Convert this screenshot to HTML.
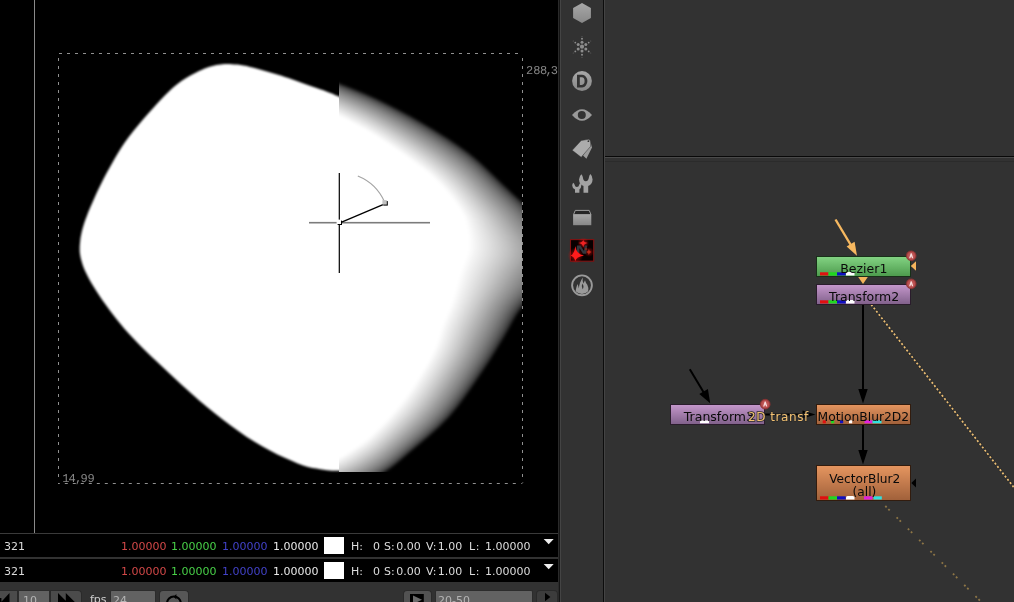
<!DOCTYPE html>
<html><head><meta charset="utf-8"><title>Nuke</title>
<style>
html,body{margin:0;padding:0}
body{width:1014px;height:602px;overflow:hidden;background:#323232;position:relative;font-family:"Liberation Sans",sans-serif;font-size:12px;color:#d8d8d8}
.abs{position:absolute}
svg,.st,.fld{will-change:transform}
#viewer{left:0;top:0;width:558px;height:582px;background:#000}
.st{position:absolute;white-space:nowrap;font-family:"DejaVu Sans","Liberation Sans",sans-serif;font-size:11px;line-height:14px;height:14px}
.btn{position:absolute;top:590px;height:14px;background:#4b4b4b;border-radius:4px 4px 0 0;border:1px solid #2a2a2a;border-bottom:none;box-sizing:border-box}
.fld{position:absolute;top:590px;height:14px;background:#626262;border:1px solid #2c2c2c;border-bottom:none;box-sizing:border-box;color:#b4b4b4;font-family:"DejaVu Sans","Liberation Sans",sans-serif;font-size:11px;line-height:20px;padding-left:2px;border-radius:2px 2px 0 0}
.nl{font-family:"DejaVu Sans","Liberation Sans",sans-serif;font-size:12px}
</style></head><body>
<div id="viewer" class="abs"></div>
<svg class="abs" style="left:0;top:0" width="558" height="534" viewBox="0 0 558 534">
<defs>
<clipPath id="cl"><rect x="0" y="0" width="339" height="534"/></clipPath>
<clipPath id="cr"><rect x="339" y="53" width="183" height="419"/></clipPath>
<filter id="soft2" filterUnits="userSpaceOnUse" x="300" y="40" width="300" height="480"><feGaussianBlur stdDeviation="1.6"/></filter>
<filter id="soft" x="-5%" y="-5%" width="110%" height="110%"><feGaussianBlur stdDeviation="0.9"/></filter>
</defs>
<g clip-path="url(#cl)"><path d="M352.0,102.0L349.8,101.1 347.6,100.2 345.4,99.3 343.1,98.4 341.0,97.5 338.8,96.6 336.8,95.7 334.9,94.9 333.1,94.1 331.1,93.3 328.9,92.4 326.4,91.4 323.4,90.3 320.1,89.2 316.6,87.9 312.9,86.7 309.2,85.4 305.7,84.2 302.2,83.0 298.8,81.7 295.4,80.5 291.9,79.3 288.4,78.1 285.0,76.9 281.6,75.8 278.1,74.7 274.7,73.7 271.2,72.7 267.8,71.7 264.3,70.7 260.8,69.7 257.2,68.8 253.6,67.8 250.1,66.9 246.7,66.1 243.5,65.5 240.5,65.0 237.5,64.6 234.7,64.4 232.0,64.2 229.5,64.1 227.0,64.1 224.7,64.1 222.5,64.3 220.5,64.4 218.5,64.7 216.5,65.1 214.5,65.5 212.5,66.0 210.6,66.4 208.8,67.0 206.8,67.7 204.6,68.6 202.0,69.7 199.0,71.1 195.7,72.7 192.2,74.5 188.6,76.5 184.9,78.7 181.4,81.1 178.1,83.6 174.9,86.1 171.7,88.8 168.4,91.9 164.8,95.4 160.7,99.7 155.9,104.9 150.5,110.9 144.7,117.5 139.0,124.2 133.6,130.8 128.9,136.8 124.9,142.3 121.4,147.5 118.3,152.5 115.3,157.4 112.5,162.4 109.7,167.4 106.9,172.5 104.1,177.7 101.5,182.9 99.0,188.1 96.6,193.1 94.4,198.0 92.3,202.8 90.2,207.5 88.3,212.1 86.6,216.6 85.0,220.8 83.7,224.8 82.6,228.5 81.7,231.9 81.1,235.1 80.5,238.1 80.2,241.0 79.9,243.9 79.7,246.6 79.7,249.1 79.7,251.6 80.0,254.0 80.4,256.5 81.0,259.2 81.8,262.1 82.7,265.0 83.8,268.0 85.2,271.2 86.8,274.6 88.7,278.3 90.9,282.3 93.5,286.6 96.3,291.1 99.4,295.7 102.6,300.4 105.9,305.1 109.3,309.8 112.9,314.5 116.6,319.2 120.5,324.1 124.6,328.9 128.9,333.8 133.4,338.6 137.9,343.3 142.6,348.0 147.7,352.9 153.2,358.2 159.4,364.0 166.3,370.5 174.0,377.7 182.1,385.2 190.5,392.8 198.9,400.2 207.0,407.0 215.0,413.4 223.0,419.7 231.0,425.7 239.0,431.5 246.8,436.9 254.5,441.8 262.1,446.3 269.9,450.5 277.4,454.4 284.7,457.8 291.6,460.8 297.7,463.4 303.1,465.4 308.0,466.9 312.4,467.9 316.4,468.6 320.1,469.2 323.6,469.8 326.8,470.3 329.5,470.5 331.9,470.7 334.2,470.7 336.4,470.7 338.7,470.7 341.0,470.8 343.3,470.8 345.5,470.8 347.6,470.7 349.8,470.7 352.0,470.7Z" fill="#fff" filter="url(#soft)"/></g>
<g clip-path="url(#cr)"><g fill="#fff" filter="url(#soft2)">
<path d="M320.0,76.0L324.3,77.6 328.3,79.0 332.9,80.7 339.0,83.0 346.9,86.0 356.0,89.6 366.1,93.7 376.5,98.4 387.5,103.7 399.2,109.7 411.2,116.1 423.0,122.8 434.8,129.8 446.8,137.3 458.5,145.0 469.5,153.0 479.5,161.3 488.9,170.1 497.9,178.8 506.7,187.3 515.4,195.4 524.0,203.2 532.2,211.0 540.0,219.0 548.3,227.2 556.8,235.6 563.6,243.9 567.0,252.0 565.6,259.8 560.8,267.4 554.3,274.9 548.0,282.0 541.8,288.7 534.9,295.1 528.0,301.4 522.0,308.0 517.2,314.9 513.1,322.0 509.2,329.3 504.8,337.0 500.0,345.0 495.0,353.2 489.5,361.9 483.2,371.5 475.8,382.4 467.5,394.4 458.7,406.4 449.6,417.4 439.7,427.4 429.0,436.9 418.7,445.5 409.7,453.0 402.7,459.1 397.0,463.9 391.7,468.1 386.0,472.0 379.8,475.8 373.4,479.2 366.8,482.3 360.0,485.0 352.8,487.2 345.2,488.9 337.6,490.4 330.0,492.0 300.0,492.0 300.0,76.0Z" opacity="0.0208"/>
<path d="M320.0,76.0L324.3,77.6 328.3,79.0 332.9,80.7 339.0,83.0 346.9,86.1 356.0,89.6 366.1,93.7 376.5,98.4 387.5,103.8 399.2,109.7 411.2,116.1 423.0,122.8 434.8,129.9 446.8,137.3 458.5,145.0 469.5,153.0 479.5,161.4 488.9,170.1 497.9,178.8 506.7,187.3 515.4,195.4 524.0,203.2 532.2,211.0 540.0,219.0 548.2,227.2 556.7,235.6 563.6,243.9 567.0,252.0 565.6,259.8 560.8,267.4 554.3,274.8 548.0,282.0 541.7,288.7 534.8,295.1 528.0,301.4 522.0,308.0 517.2,314.9 513.1,322.0 509.2,329.3 504.8,337.0 500.0,345.0 495.0,353.2 489.5,361.9 483.2,371.5 475.8,382.4 467.5,394.4 458.7,406.4 449.6,417.4 439.7,427.4 429.0,436.9 418.7,445.5 409.7,453.0 402.7,459.0 397.0,463.9 391.7,468.1 386.0,472.0 379.7,475.8 373.4,479.2 366.8,482.3 360.0,485.0 352.8,487.2 345.2,488.9 337.6,490.4 330.0,492.0 300.0,492.0 300.0,76.0Z" opacity="0.0213"/>
<path d="M320.0,76.0L324.3,77.6 328.3,79.0 332.9,80.7 339.0,83.0 346.9,86.1 356.0,89.7 366.1,93.8 376.5,98.5 387.5,103.8 399.2,109.7 411.2,116.1 423.0,122.9 434.8,129.9 446.8,137.3 458.5,145.1 469.5,153.1 479.5,161.4 488.9,170.1 497.8,178.9 506.6,187.3 515.4,195.4 523.9,203.3 532.1,211.1 539.9,219.0 548.1,227.2 556.6,235.6 563.5,243.9 566.9,252.0 565.5,259.8 560.7,267.4 554.2,274.8 547.9,282.0 541.7,288.7 534.8,295.1 527.9,301.4 521.9,308.0 517.1,314.9 513.0,322.0 509.1,329.3 504.7,337.0 499.9,344.9 494.9,353.2 489.5,361.9 483.1,371.5 475.7,382.4 467.5,394.4 458.7,406.4 449.5,417.4 439.6,427.4 429.0,436.9 418.6,445.5 409.6,453.0 402.6,459.0 396.9,463.9 391.7,468.0 386.0,472.0 379.7,475.8 373.4,479.2 366.8,482.3 360.0,485.0 352.8,487.1 345.2,488.8 337.6,490.4 330.0,492.0 300.0,492.0 300.0,76.0Z" opacity="0.0217"/>
<path d="M320.0,76.1L324.3,77.7 328.3,79.1 332.9,80.8 339.0,83.1 346.9,86.2 356.0,89.7 366.1,93.8 376.5,98.5 387.5,103.9 399.2,109.8 411.2,116.2 423.0,122.9 434.8,130.0 446.8,137.4 458.5,145.2 469.4,153.1 479.5,161.5 488.8,170.2 497.8,178.9 506.6,187.4 515.3,195.4 523.8,203.3 532.0,211.1 539.8,219.0 548.0,227.2 556.5,235.6 563.3,243.9 566.7,252.0 565.3,259.8 560.5,267.4 554.0,274.8 547.7,282.0 541.5,288.7 534.6,295.0 527.8,301.4 521.8,308.0 517.0,314.9 512.9,321.9 509.0,329.3 504.6,337.0 499.8,344.9 494.8,353.1 489.4,361.9 483.0,371.4 475.6,382.4 467.4,394.3 458.6,406.3 449.5,417.3 439.6,427.4 428.9,436.8 418.6,445.5 409.6,452.9 402.6,459.0 396.9,463.8 391.6,468.0 385.9,471.9 379.7,475.7 373.3,479.2 366.8,482.2 359.9,484.9 352.7,487.1 345.2,488.8 337.6,490.3 330.0,491.9 300.0,491.9 300.0,76.1Z" opacity="0.0222"/>
<path d="M320.0,76.2L324.3,77.7 328.3,79.2 332.9,80.8 339.0,83.2 346.9,86.2 356.0,89.8 366.1,93.9 376.5,98.6 387.5,104.0 399.2,109.9 411.2,116.3 423.0,123.1 434.8,130.1 446.8,137.5 458.4,145.2 469.4,153.2 479.4,161.5 488.7,170.2 497.7,179.0 506.4,187.4 515.2,195.5 523.7,203.3 531.8,211.1 539.6,219.0 547.8,227.2 556.3,235.6 563.1,243.9 566.5,252.0 565.1,259.8 560.3,267.4 553.8,274.8 547.5,281.9 541.3,288.7 534.5,295.0 527.6,301.3 521.6,308.0 516.8,314.9 512.8,321.9 508.9,329.2 504.5,336.9 499.7,344.9 494.7,353.1 489.3,361.9 482.9,371.4 475.5,382.3 467.3,394.3 458.5,406.3 449.4,417.3 439.4,427.3 428.8,436.8 418.5,445.4 409.5,452.9 402.5,459.0 396.8,463.8 391.5,467.9 385.8,471.9 379.6,475.7 373.2,479.1 366.7,482.2 359.9,484.9 352.7,487.0 345.2,488.7 337.5,490.3 329.9,491.9 300.0,491.9 300.0,76.2Z" opacity="0.0227"/>
<path d="M320.0,76.3L324.3,77.8 328.3,79.2 332.9,80.9 339.0,83.3 346.9,86.3 356.0,89.9 366.1,94.0 376.5,98.7 387.5,104.1 399.2,110.0 411.2,116.5 423.0,123.2 434.8,130.2 446.7,137.6 458.4,145.4 469.3,153.3 479.3,161.6 488.6,170.3 497.5,179.0 506.3,187.5 515.0,195.5 523.5,203.4 531.6,211.1 539.4,219.1 547.6,227.3 556.0,235.6 562.8,243.9 566.2,252.0 564.8,259.8 560.0,267.4 553.5,274.8 547.3,281.9 541.1,288.6 534.2,295.0 527.4,301.3 521.4,307.9 516.6,314.9 512.6,321.9 508.7,329.2 504.3,336.9 499.5,344.8 494.5,353.1 489.1,361.8 482.8,371.3 475.4,382.3 467.1,394.2 458.3,406.2 449.2,417.2 439.3,427.3 428.7,436.7 418.3,445.4 409.4,452.8 402.4,458.9 396.7,463.7 391.4,467.9 385.7,471.8 379.5,475.6 373.2,479.0 366.6,482.1 359.8,484.8 352.6,486.9 345.1,488.7 337.5,490.2 329.9,491.8 300.0,491.8 300.0,76.3Z" opacity="0.0233"/>
<path d="M320.0,76.4L324.3,77.9 328.3,79.4 332.9,81.1 339.0,83.4 346.9,86.5 356.0,90.0 366.1,94.2 376.5,98.9 387.5,104.2 399.2,110.2 411.2,116.6 423.0,123.4 434.8,130.4 446.7,137.8 458.3,145.5 469.2,153.5 479.2,161.8 488.5,170.4 497.4,179.1 506.1,187.6 514.8,195.6 523.2,203.4 531.4,211.2 539.1,219.1 547.3,227.3 555.7,235.6 562.5,243.9 565.8,252.0 564.4,259.7 559.6,267.3 553.2,274.7 546.9,281.9 540.8,288.6 533.9,295.0 527.1,301.3 521.1,307.9 516.4,314.8 512.3,321.9 508.4,329.2 504.0,336.8 499.3,344.8 494.3,353.0 488.9,361.7 482.6,371.3 475.2,382.2 467.0,394.2 458.1,406.2 449.0,417.2 439.1,427.2 428.5,436.7 418.2,445.3 409.2,452.8 402.2,458.8 396.5,463.7 391.3,467.8 385.6,471.7 379.4,475.5 373.1,478.9 366.5,482.0 359.7,484.7 352.6,486.8 345.1,488.6 337.4,490.1 329.9,491.7 300.0,491.7 300.0,76.4Z" opacity="0.0238"/>
<path d="M320.0,76.5L324.3,78.1 328.3,79.5 332.9,81.2 339.0,83.6 346.9,86.6 356.0,90.2 366.1,94.3 376.5,99.0 387.5,104.4 399.2,110.4 411.2,116.8 423.0,123.6 434.8,130.6 446.6,138.0 458.2,145.7 469.1,153.6 479.0,161.9 488.3,170.6 497.2,179.3 505.9,187.7 514.6,195.7 523.0,203.5 531.1,211.2 538.8,219.1 546.9,227.3 555.3,235.6 562.0,243.9 565.3,251.9 564.0,259.7 559.2,267.3 552.8,274.7 546.5,281.8 540.4,288.6 533.6,294.9 526.8,301.3 520.8,307.9 516.0,314.8 512.0,321.8 508.1,329.1 503.8,336.8 499.0,344.7 494.1,352.9 488.6,361.7 482.3,371.2 475.0,382.1 466.7,394.1 457.9,406.1 448.8,417.1 439.0,427.1 428.3,436.6 418.0,445.2 409.1,452.7 402.1,458.7 396.4,463.6 391.1,467.7 385.4,471.6 379.2,475.4 372.9,478.8 366.4,481.9 359.6,484.5 352.5,486.7 345.0,488.4 337.4,490.0 329.8,491.6 300.0,491.6 300.0,76.5Z" opacity="0.0244"/>
<path d="M320.0,76.7L324.3,78.3 328.3,79.7 332.9,81.4 339.0,83.7 346.9,86.8 356.0,90.4 366.1,94.5 376.5,99.2 387.5,104.6 399.2,110.6 411.2,117.1 423.0,123.8 434.7,130.8 446.6,138.2 458.1,145.9 469.0,153.8 478.9,162.1 488.1,170.7 497.0,179.4 505.7,187.8 514.3,195.8 522.7,203.5 530.7,211.3 538.4,219.1 546.5,227.3 554.8,235.6 561.5,243.9 564.8,251.9 563.5,259.7 558.7,267.3 552.3,274.6 546.0,281.8 539.9,288.5 533.1,294.9 526.4,301.2 520.4,307.9 515.7,314.8 511.7,321.8 507.8,329.0 503.4,336.7 498.7,344.6 493.8,352.8 488.4,361.6 482.1,371.1 474.7,382.0 466.5,394.0 457.7,406.0 448.6,417.0 438.7,427.0 428.1,436.5 417.8,445.1 408.9,452.6 401.9,458.6 396.2,463.5 390.9,467.6 385.3,471.5 379.1,475.3 372.8,478.7 366.3,481.7 359.5,484.4 352.4,486.6 344.9,488.3 337.3,489.8 329.8,491.5 300.0,491.5 300.0,76.7Z" opacity="0.0250"/>
<path d="M320.0,76.9L324.3,78.5 328.3,79.9 332.9,81.6 339.0,83.9 346.9,87.0 356.0,90.6 366.1,94.8 376.5,99.5 387.5,104.9 399.2,110.9 411.2,117.4 423.0,124.1 434.7,131.1 446.5,138.5 458.0,146.2 468.8,154.0 478.7,162.3 487.9,170.9 496.7,179.6 505.4,187.9 513.9,195.9 522.3,203.6 530.3,211.3 537.9,219.2 546.0,227.3 554.3,235.6 560.9,243.9 564.2,251.9 562.8,259.6 558.1,267.2 551.7,274.6 545.5,281.7 539.4,288.4 532.6,294.8 525.9,301.2 520.0,307.8 515.3,314.7 511.3,321.7 507.4,329.0 503.0,336.6 498.3,344.6 493.4,352.7 488.0,361.5 481.7,371.0 474.4,381.9 466.2,393.9 457.4,405.9 448.3,416.9 438.4,426.9 427.8,436.4 417.6,445.0 408.6,452.5 401.6,458.5 396.0,463.3 390.7,467.4 385.1,471.3 378.9,475.1 372.6,478.5 366.2,481.6 359.4,484.2 352.3,486.4 344.8,488.1 337.2,489.7 329.7,491.3 300.0,491.3 300.0,76.9Z" opacity="0.0256"/>
<path d="M320.0,77.1L324.3,78.7 328.3,80.1 332.9,81.8 339.0,84.2 346.9,87.2 356.0,90.9 366.1,95.0 376.5,99.8 387.5,105.2 399.2,111.2 411.2,117.7 423.0,124.4 434.7,131.4 446.4,138.8 457.9,146.4 468.6,154.3 478.5,162.5 487.7,171.1 496.4,179.7 505.1,188.1 513.6,196.0 521.9,203.7 529.8,211.4 537.4,219.2 545.4,227.3 553.6,235.6 560.3,243.9 563.5,251.9 562.2,259.6 557.4,267.2 551.1,274.5 544.9,281.6 538.8,288.4 532.1,294.8 525.4,301.2 519.5,307.8 514.8,314.7 510.8,321.7 506.9,328.9 502.6,336.5 497.9,344.5 493.0,352.6 487.7,361.3 481.4,370.9 474.0,381.8 465.8,393.7 457.1,405.7 448.0,416.8 438.1,426.8 427.6,436.2 417.3,444.9 408.4,452.4 401.4,458.4 395.7,463.2 390.5,467.3 384.8,471.2 378.7,475.0 372.4,478.3 366.0,481.4 359.3,484.0 352.1,486.2 344.7,488.0 337.1,489.5 329.6,491.2 300.0,491.2 300.0,77.1Z" opacity="0.0263"/>
<path d="M320.0,77.4L324.3,78.9 328.3,80.4 332.9,82.1 339.0,84.4 346.9,87.5 356.0,91.1 366.1,95.3 376.5,100.1 387.5,105.5 399.3,111.5 411.2,118.0 423.0,124.8 434.7,131.8 446.4,139.1 457.8,146.8 468.4,154.6 478.2,162.8 487.4,171.4 496.1,180.0 504.7,188.3 513.2,196.2 521.4,203.8 529.3,211.5 536.8,219.3 544.8,227.4 552.9,235.6 559.5,243.8 562.7,251.8 561.4,259.5 556.7,267.1 550.3,274.5 544.2,281.6 538.2,288.3 531.5,294.7 524.8,301.1 519.0,307.7 514.3,314.6 510.3,321.6 506.4,328.8 502.1,336.4 497.4,344.3 492.6,352.5 487.2,361.2 481.0,370.7 473.7,381.6 465.5,393.6 456.7,405.6 447.6,416.6 437.8,426.6 427.2,436.1 417.0,444.7 408.1,452.2 401.1,458.2 395.4,463.0 390.2,467.1 384.6,471.0 378.4,474.8 372.2,478.2 365.8,481.2 359.1,483.8 352.0,486.0 344.6,487.8 337.0,489.3 329.6,491.0 300.0,491.0 300.0,77.4Z" opacity="0.0270"/>
<path d="M320.0,77.7L324.3,79.2 328.3,80.6 332.9,82.3 339.0,84.7 346.9,87.8 356.0,91.4 366.1,95.6 376.5,100.4 387.5,105.8 399.3,111.9 411.3,118.4 423.0,125.2 434.6,132.2 446.3,139.5 457.6,147.1 468.2,154.9 478.0,163.1 487.1,171.6 495.8,180.2 504.3,188.5 512.7,196.3 520.9,204.0 528.7,211.6 536.2,219.3 544.1,227.4 552.2,235.6 558.7,243.8 561.9,251.8 560.5,259.5 555.8,267.0 549.6,274.4 543.4,281.5 537.4,288.2 530.8,294.7 524.2,301.0 518.3,307.7 513.7,314.5 509.7,321.5 505.9,328.7 501.6,336.3 496.9,344.2 492.1,352.4 486.8,361.1 480.5,370.6 473.2,381.5 465.0,393.4 456.3,405.4 447.2,416.4 437.4,426.5 426.9,436.0 416.6,444.6 407.7,452.1 400.8,458.1 395.1,462.9 389.9,466.9 384.3,470.8 378.2,474.6 372.0,477.9 365.6,480.9 358.9,483.6 351.8,485.8 344.5,487.5 336.9,489.1 329.5,490.8 300.0,490.8 300.0,77.7Z" opacity="0.0278"/>
<path d="M320.0,78.0L324.3,79.5 328.3,81.0 332.9,82.7 339.0,85.0 346.9,88.1 356.0,91.8 366.1,96.0 376.5,100.8 387.5,106.2 399.3,112.3 411.3,118.9 423.0,125.6 434.6,132.6 446.2,139.9 457.4,147.5 468.0,155.3 477.7,163.4 486.8,171.9 495.4,180.4 503.8,188.7 512.2,196.5 520.3,204.1 528.1,211.6 535.5,219.4 543.3,227.4 551.3,235.6 557.8,243.8 560.9,251.8 559.6,259.4 554.9,267.0 548.7,274.3 542.6,281.4 536.6,288.1 530.0,294.6 523.5,301.0 517.7,307.6 513.0,314.5 509.1,321.4 505.3,328.6 501.0,336.2 496.3,344.1 491.6,352.2 486.3,360.9 480.1,370.4 472.8,381.3 464.6,393.2 455.8,405.3 446.8,416.3 437.0,426.3 426.5,435.8 416.2,444.4 407.4,451.9 400.4,457.9 394.8,462.7 389.6,466.7 384.0,470.6 377.9,474.3 371.7,477.7 365.4,480.7 358.7,483.3 351.7,485.5 344.3,487.3 336.8,488.9 329.4,490.5 300.0,490.5 300.0,78.0Z" opacity="0.0286"/>
<path d="M320.0,78.3L324.3,79.9 328.3,81.3 332.9,83.0 339.0,85.4 346.9,88.5 356.0,92.1 366.1,96.4 376.5,101.2 387.5,106.6 399.3,112.8 411.3,119.3 423.0,126.1 434.5,133.1 446.1,140.4 457.2,147.9 467.7,155.7 477.4,163.8 486.4,172.2 495.0,180.7 503.3,188.9 511.6,196.7 519.7,204.2 527.4,211.7 534.7,219.4 542.4,227.4 550.4,235.6 556.8,243.8 559.9,251.7 558.5,259.4 553.9,266.9 547.7,274.2 541.7,281.3 535.8,288.0 529.2,294.5 522.7,300.9 516.9,307.6 512.3,314.4 508.4,321.3 504.6,328.5 500.3,336.1 495.7,343.9 491.0,352.1 485.7,360.7 479.5,370.2 472.2,381.1 464.1,393.1 455.3,405.1 446.3,416.1 436.5,426.1 426.0,435.6 415.8,444.2 407.0,451.7 400.0,457.7 394.4,462.5 389.2,466.5 383.6,470.3 377.6,474.1 371.4,477.4 365.1,480.4 358.5,483.1 351.5,485.3 344.1,487.0 336.7,488.6 329.3,490.3 300.0,490.3 300.0,78.3Z" opacity="0.0294"/>
<path d="M320.0,78.7L324.3,80.2 328.3,81.7 332.9,83.4 339.0,85.7 346.9,88.9 356.0,92.5 366.1,96.8 376.5,101.6 387.5,107.1 399.3,113.3 411.3,119.9 423.0,126.6 434.5,133.6 445.9,140.9 457.0,148.4 467.5,156.1 477.0,164.2 486.0,172.6 494.5,181.0 502.8,189.2 511.0,196.9 519.0,204.4 526.6,211.9 533.8,219.5 541.5,227.5 549.4,235.6 555.7,243.8 558.8,251.7 557.4,259.3 552.8,266.8 546.7,274.1 540.7,281.2 534.8,287.9 528.3,294.4 521.9,300.8 516.1,307.5 511.5,314.3 507.6,321.2 503.9,328.4 499.6,335.9 495.0,343.8 490.3,351.9 485.1,360.5 478.9,370.0 471.7,380.9 463.5,392.8 454.8,404.8 445.8,415.9 436.0,425.9 425.5,435.4 415.4,444.0 406.5,451.5 399.6,457.5 394.0,462.2 388.8,466.3 383.3,470.1 377.2,473.8 371.1,477.1 364.8,480.1 358.3,482.8 351.3,484.9 344.0,486.7 336.5,488.3 329.2,490.0 300.0,490.0 300.0,78.7Z" opacity="0.0303"/>
<path d="M320.0,79.1L324.3,80.6 328.3,82.1 332.9,83.8 339.0,86.1 346.9,89.3 356.0,93.0 366.1,97.2 376.5,102.1 387.5,107.6 399.3,113.8 411.3,120.4 423.0,127.2 434.4,134.2 445.8,141.4 456.8,148.8 467.2,156.5 476.7,164.6 485.5,172.9 494.0,181.3 502.2,189.5 510.4,197.1 518.2,204.6 525.8,212.0 532.9,219.6 540.5,227.5 548.3,235.6 554.5,243.7 557.6,251.6 556.2,259.2 551.6,266.7 545.5,274.0 539.6,281.0 533.8,287.8 527.3,294.3 520.9,300.8 515.3,307.4 510.7,314.2 506.8,321.1 503.1,328.2 498.9,335.8 494.3,343.6 489.6,351.7 484.4,360.3 478.3,369.8 471.1,380.7 462.9,392.6 454.2,404.6 445.2,415.6 435.5,425.7 425.0,435.2 414.9,443.8 406.1,451.3 399.2,457.3 393.6,462.0 388.4,466.0 382.9,469.8 376.8,473.5 370.8,476.8 364.5,479.8 358.0,482.4 351.0,484.6 343.8,486.4 336.4,488.0 329.0,489.7 300.0,489.7 300.0,79.1Z" opacity="0.0312"/>
<path d="M320.0,79.5L324.3,81.0 328.3,82.5 332.9,84.2 339.0,86.6 346.9,89.7 356.0,93.4 366.1,97.7 376.5,102.6 387.6,108.1 399.4,114.4 411.4,121.0 423.0,127.8 434.4,134.8 445.7,142.0 456.6,149.4 466.8,157.0 476.3,165.0 485.1,173.3 493.5,181.7 501.6,189.8 509.7,197.4 517.5,204.8 524.9,212.1 532.0,219.7 539.4,227.5 547.1,235.6 553.3,243.7 556.2,251.6 554.9,259.2 550.4,266.6 544.3,273.8 538.4,280.9 532.7,287.7 526.3,294.2 520.0,300.7 514.3,307.3 509.8,314.1 506.0,321.0 502.2,328.1 498.0,335.6 493.5,343.4 488.9,351.5 483.7,360.1 477.6,369.6 470.4,380.4 462.3,392.4 453.6,404.4 444.6,415.4 434.9,425.4 424.5,434.9 414.3,443.6 405.6,451.0 398.7,457.0 393.1,461.7 387.9,465.7 382.4,469.5 376.4,473.2 370.4,476.5 364.2,479.4 357.7,482.1 350.8,484.3 343.6,486.1 336.2,487.7 328.9,489.4 300.0,489.4 300.0,79.5Z" opacity="0.0323"/>
<path d="M320.0,79.9L324.3,81.5 328.3,82.9 332.9,84.6 339.0,87.1 346.9,90.2 356.0,93.9 366.1,98.2 376.5,103.1 387.6,108.7 399.4,115.0 411.4,121.7 423.0,128.5 434.3,135.4 445.5,142.6 456.3,149.9 466.5,157.5 475.9,165.5 484.6,173.8 492.9,182.1 501.0,190.1 508.9,197.7 516.6,205.0 524.0,212.2 530.9,219.7 538.3,227.6 545.9,235.6 551.9,243.7 554.8,251.5 553.5,259.1 549.0,266.5 543.0,273.7 537.2,280.8 531.5,287.6 525.2,294.1 518.9,300.6 513.3,307.3 508.9,314.0 505.0,320.9 501.3,327.9 497.2,335.4 492.7,343.2 488.1,351.2 483.0,359.9 476.9,369.3 469.7,380.2 461.6,392.1 453.0,404.1 444.0,415.1 434.3,425.2 423.9,434.7 413.8,443.3 405.0,450.8 398.2,456.7 392.6,461.4 387.4,465.4 381.9,469.2 376.0,472.8 370.0,476.1 363.9,479.1 357.4,481.7 350.5,483.9 343.4,485.7 336.0,487.3 328.8,489.1 300.0,489.1 300.0,79.9Z" opacity="0.0333"/>
<path d="M320.0,80.4L324.3,82.0 328.3,83.4 332.9,85.1 339.0,87.5 346.9,90.7 356.0,94.5 366.1,98.8 376.5,103.7 387.6,109.3 399.4,115.6 411.4,122.3 423.0,129.2 434.2,136.1 445.3,143.2 456.1,150.5 466.1,158.1 475.4,166.0 484.0,174.2 492.3,182.5 500.3,190.4 508.1,197.9 515.7,205.2 522.9,212.4 529.8,219.8 537.1,227.6 544.5,235.7 550.5,243.7 553.4,251.4 552.0,259.0 547.6,266.4 541.6,273.6 535.9,280.6 530.2,287.4 524.0,294.0 517.8,300.5 512.3,307.2 507.8,313.9 504.0,320.7 500.3,327.8 496.2,335.2 491.8,343.0 487.2,351.0 482.2,359.6 476.1,369.0 469.0,379.9 460.9,391.8 452.2,403.8 443.3,414.9 433.6,424.9 423.3,434.4 413.2,443.1 404.4,450.5 397.6,456.5 392.0,461.1 386.9,465.1 381.5,468.8 375.6,472.5 369.6,475.7 363.5,478.7 357.1,481.3 350.3,483.5 343.1,485.3 335.8,487.0 328.6,488.7 300.0,488.7 300.0,80.4Z" opacity="0.0345"/>
<path d="M320.0,80.9L324.3,82.5 328.3,83.9 332.9,85.7 339.0,88.1 346.9,91.3 356.0,95.0 366.1,99.4 376.5,104.3 387.6,110.0 399.4,116.3 411.4,123.1 423.0,129.9 434.2,136.8 445.2,143.9 455.8,151.2 465.7,158.7 474.9,166.6 483.5,174.7 491.6,182.9 499.5,190.8 507.3,198.2 514.7,205.4 521.9,212.5 528.6,219.9 535.8,227.7 543.1,235.7 549.0,243.6 551.8,251.4 550.4,258.9 546.0,266.2 540.2,273.4 534.5,280.5 528.9,287.3 522.7,293.8 516.6,300.4 511.2,307.1 506.7,313.8 503.0,320.6 499.3,327.6 495.2,335.0 490.8,342.7 486.3,350.8 481.3,359.3 475.3,368.7 468.2,379.6 460.1,391.5 451.5,403.5 442.6,414.6 432.9,424.6 422.6,434.1 412.5,442.8 403.8,450.2 397.0,456.2 391.5,460.8 386.4,464.7 380.9,468.5 375.1,472.1 369.2,475.3 363.1,478.2 356.8,480.8 350.0,483.1 342.9,484.9 335.6,486.6 328.5,488.3 300.0,488.3 300.0,80.9Z" opacity="0.0357"/>
<path d="M320.0,81.5L324.3,83.0 328.3,84.5 332.9,86.2 339.0,88.6 346.9,91.9 356.0,95.6 366.1,100.0 376.5,104.9 387.6,110.6 399.4,117.0 411.5,123.8 423.0,130.7 434.1,137.6 445.0,144.6 455.5,151.9 465.3,159.3 474.4,167.1 482.9,175.2 490.9,183.4 498.7,191.2 506.4,198.5 513.7,205.6 520.7,212.7 527.4,220.0 534.4,227.7 541.6,235.7 547.3,243.6 550.1,251.3 548.7,258.8 544.4,266.1 538.6,273.3 533.0,280.3 527.5,287.1 521.4,293.7 515.3,300.3 510.0,307.0 505.6,313.7 501.8,320.4 498.2,327.4 494.2,334.8 489.8,342.5 485.4,350.5 480.4,359.0 474.5,368.4 467.3,379.3 459.3,391.2 450.7,403.2 441.8,414.3 432.2,424.3 421.9,433.8 411.9,442.5 403.2,449.9 396.4,455.8 390.8,460.5 385.8,464.4 380.4,468.1 374.6,471.7 368.7,474.9 362.7,477.8 356.4,480.4 349.7,482.6 342.6,484.4 335.4,486.1 328.3,487.9 300.0,487.9 300.0,81.5Z" opacity="0.0370"/>
<path d="M320.0,82.0L324.3,83.6 328.3,85.1 332.9,86.8 339.0,89.2 346.9,92.5 356.0,96.3 366.1,100.6 376.5,105.6 387.6,111.4 399.5,117.8 411.5,124.6 423.0,131.5 434.0,138.4 444.8,145.4 455.1,152.6 464.9,160.0 473.9,167.7 482.2,175.8 490.2,183.8 497.9,191.6 505.4,198.9 512.6,205.9 519.5,212.9 526.0,220.1 532.9,227.8 540.0,235.7 545.6,243.6 548.3,251.2 547.0,258.7 542.7,266.0 536.9,273.1 531.4,280.1 525.9,286.9 520.0,293.6 514.0,300.2 508.7,306.9 504.4,313.6 500.7,320.3 497.1,327.2 493.0,334.5 488.7,342.2 484.3,350.2 479.4,358.7 473.5,368.1 466.5,378.9 458.4,390.9 449.8,402.9 441.0,413.9 431.4,424.0 421.1,433.5 411.1,442.2 402.5,449.6 395.7,455.5 390.2,460.1 385.1,464.0 379.8,467.7 374.0,471.2 368.2,474.4 362.3,477.3 356.0,479.9 349.3,482.1 342.3,484.0 335.2,485.7 328.1,487.5 300.0,487.5 300.0,82.0Z" opacity="0.0385"/>
<path d="M320.0,82.6L324.3,84.2 328.3,85.7 332.9,87.4 339.0,89.9 346.9,93.1 356.0,96.9 366.1,101.3 376.5,106.4 387.6,112.1 399.5,118.6 411.5,125.5 423.0,132.4 433.9,139.2 444.6,146.2 454.8,153.3 464.4,160.7 473.3,168.4 481.6,176.4 489.4,184.3 497.0,192.0 504.4,199.2 511.5,206.2 518.2,213.1 524.6,220.2 531.4,227.8 538.3,235.7 543.8,243.5 546.4,251.2 545.1,258.6 540.8,265.8 535.2,272.9 529.7,279.9 524.4,286.7 518.5,293.4 512.6,300.0 507.4,306.8 503.1,313.5 499.4,320.1 495.8,327.0 491.9,334.3 487.6,342.0 483.3,349.9 478.4,358.4 472.6,367.8 465.5,378.6 457.5,390.5 449.0,402.6 440.1,413.6 430.6,423.6 420.3,433.2 410.4,441.8 401.8,449.3 395.0,455.1 389.5,459.7 384.5,463.6 379.1,467.2 373.4,470.8 367.7,474.0 361.8,476.8 355.6,479.4 349.0,481.6 342.0,483.5 334.9,485.2 327.9,487.0 300.0,487.0 300.0,82.6Z" opacity="0.0400"/>
<path d="M320.0,83.3L324.3,84.9 328.3,86.3 332.9,88.0 339.0,90.5 346.9,93.8 356.0,97.6 366.1,102.1 376.5,107.1 387.6,113.0 399.5,119.5 411.6,126.4 423.0,133.3 433.8,140.1 444.4,147.1 454.4,154.1 463.9,161.4 472.7,169.1 480.9,177.0 488.6,184.9 496.1,192.5 503.3,199.6 510.3,206.4 516.9,213.3 523.1,220.4 529.8,227.9 536.5,235.7 541.9,243.5 544.5,251.1 543.1,258.4 538.9,265.6 533.4,272.7 528.0,279.7 522.7,286.6 516.9,293.3 511.1,299.9 505.9,306.6 501.7,313.3 498.1,319.9 494.6,326.8 490.6,334.0 486.4,341.7 482.1,349.6 477.3,358.1 471.5,367.4 464.5,378.2 456.6,390.2 448.0,402.2 439.2,413.2 429.7,423.3 419.5,432.8 409.6,441.5 401.0,448.9 394.3,454.8 388.8,459.3 383.8,463.1 378.5,466.8 372.8,470.3 367.2,473.4 361.3,476.3 355.2,478.9 348.6,481.1 341.7,483.0 334.7,484.7 327.7,486.5 300.0,486.5 300.0,83.3Z" opacity="0.0417"/>
<path d="M320.0,84.0L324.3,85.5 328.3,87.0 332.9,88.7 339.0,91.2 346.9,94.5 356.0,98.4 366.1,102.8 376.5,107.9 387.6,113.8 399.6,120.4 411.6,127.4 423.0,134.3 433.7,141.1 444.1,148.0 454.1,155.0 463.4,162.2 472.1,169.8 480.1,177.6 487.7,185.4 495.1,192.9 502.2,200.0 509.0,206.7 515.5,213.5 521.6,220.5 528.1,228.0 534.7,235.7 539.9,243.4 542.4,251.0 541.0,258.3 536.9,265.5 531.4,272.5 526.1,279.5 520.9,286.4 515.2,293.1 509.5,299.8 504.5,306.5 500.3,313.2 496.7,319.7 493.2,326.5 489.3,333.8 485.2,341.4 481.0,349.3 476.2,357.7 470.5,367.0 463.5,377.9 455.6,389.8 447.0,401.8 438.3,412.8 428.8,422.9 418.6,432.4 408.8,441.1 400.2,448.5 393.5,454.4 388.1,458.9 383.1,462.7 377.8,466.3 372.2,469.8 366.6,472.9 360.8,475.7 354.8,478.3 348.3,480.5 341.4,482.4 334.4,484.2 327.5,486.0 300.0,486.0 300.0,84.0Z" opacity="0.0435"/>
<path d="M320.0,84.7L324.3,86.3 328.3,87.7 332.9,89.4 339.0,91.9 346.9,95.2 356.0,99.1 366.1,103.7 376.5,108.8 387.6,114.7 399.6,121.4 411.6,128.4 423.0,135.3 433.6,142.1 443.9,148.9 453.7,155.9 462.9,163.0 471.4,170.5 479.3,178.3 486.8,186.0 494.1,193.4 501.0,200.4 507.7,207.0 514.0,213.7 520.0,220.6 526.3,228.0 532.7,235.7 537.8,243.4 540.2,250.9 538.9,258.2 534.8,265.3 529.4,272.3 524.2,279.3 519.1,286.2 513.5,292.9 507.9,299.6 502.9,306.4 498.8,313.0 495.3,319.5 491.8,326.3 487.9,333.5 483.9,341.1 479.7,348.9 475.0,357.3 469.3,366.7 462.4,377.4 454.5,389.4 446.0,401.4 437.3,412.4 427.8,422.5 417.7,432.0 407.9,440.7 399.4,448.1 392.7,453.9 387.3,458.4 382.3,462.2 377.1,465.8 371.5,469.3 366.0,472.3 360.3,475.1 354.3,477.7 347.9,479.9 341.1,481.9 334.1,483.6 327.3,485.5 300.0,485.5 300.0,84.7Z" opacity="0.0455"/>
<path d="M320.0,85.4L324.3,87.0 328.3,88.4 332.9,90.2 339.0,92.7 346.9,96.0 356.0,100.0 366.1,104.5 376.5,109.6 387.7,115.6 399.6,122.3 411.7,129.4 423.0,136.4 433.5,143.1 443.6,149.9 453.3,156.8 462.3,163.9 470.7,171.3 478.5,179.0 485.9,186.6 493.0,194.0 499.8,200.8 506.3,207.4 512.5,213.9 518.3,220.8 524.4,228.1 530.7,235.7 535.6,243.4 537.9,250.8 536.6,258.0 532.6,265.1 527.3,272.1 522.2,279.1 517.2,285.9 511.7,292.7 506.2,299.5 501.3,306.2 497.3,312.8 493.7,319.3 490.3,326.0 486.5,333.2 482.5,340.7 478.4,348.5 473.8,356.9 468.2,366.2 461.3,377.0 453.4,389.0 444.9,401.0 436.2,412.0 426.8,422.1 416.7,431.6 407.0,440.3 398.5,447.7 391.9,453.5 386.4,458.0 381.5,461.7 376.3,465.2 370.8,468.7 365.4,471.8 359.8,474.5 353.8,477.1 347.4,479.3 340.7,481.3 333.9,483.1 327.1,485.0 300.0,485.0 300.0,85.4Z" opacity="0.0476"/>
<path d="M320.0,86.2L324.3,87.8 328.3,89.2 332.9,91.0 339.0,93.5 346.9,96.8 356.0,100.8 366.1,105.4 376.5,110.6 387.7,116.6 399.7,123.4 411.7,130.5 423.0,137.5 433.4,144.2 443.4,150.9 452.8,157.8 461.7,164.8 470.0,172.1 477.7,179.7 484.9,187.2 491.9,194.5 498.5,201.3 504.9,207.7 510.9,214.1 516.5,220.9 522.5,228.2 528.5,235.7 533.4,243.3 535.6,250.7 534.2,257.9 530.3,264.9 525.1,271.9 520.0,278.8 515.1,285.7 509.8,292.5 504.4,299.3 499.6,306.1 495.6,312.7 492.2,319.1 488.8,325.8 485.0,332.9 481.1,340.4 477.1,348.2 472.5,356.5 466.9,365.8 460.1,376.6 452.2,388.5 443.8,400.5 435.1,411.6 425.8,421.6 415.7,431.2 406.0,439.9 397.6,447.3 391.0,453.1 385.6,457.5 380.7,461.2 375.5,464.7 370.1,468.1 364.7,471.2 359.2,473.9 353.3,476.4 347.0,478.7 340.3,480.6 333.6,482.5 326.8,484.4 300.0,484.4 300.0,86.2Z" opacity="0.0500"/>
<path d="M320.0,87.0L324.3,88.6 328.3,90.0 332.9,91.8 339.0,94.3 346.9,97.7 356.0,101.7 366.1,106.3 376.5,111.5 387.7,117.6 399.7,124.5 411.8,131.6 423.0,138.6 433.3,145.3 443.1,152.0 452.4,158.8 461.1,165.7 469.2,172.9 476.8,180.4 483.9,187.9 490.7,195.1 497.2,201.7 503.4,208.1 509.2,214.4 514.6,221.1 520.4,228.2 526.3,235.7 531.0,243.3 533.1,250.6 531.7,257.7 527.9,264.7 522.8,271.7 517.8,278.6 513.0,285.5 507.8,292.3 502.6,299.2 497.8,305.9 493.9,312.5 490.5,318.9 487.2,325.5 483.5,332.5 479.6,340.0 475.6,347.8 471.2,356.1 465.7,365.4 458.8,376.1 451.0,388.0 442.6,400.1 434.0,411.1 424.7,421.2 414.7,430.7 405.0,439.4 396.6,446.8 390.0,452.6 384.7,457.0 379.8,460.6 374.7,464.1 369.3,467.5 364.0,470.5 358.6,473.2 352.8,475.7 346.6,478.0 340.0,480.0 333.2,481.9 326.6,483.8 300.0,483.8 300.0,87.0Z" opacity="0.0526"/>
<path d="M320.0,87.8L324.3,89.4 328.3,90.9 332.9,92.6 339.0,95.2 346.9,98.6 356.0,102.6 366.1,107.3 376.5,112.5 387.7,118.7 399.8,125.6 411.8,132.8 423.0,139.8 433.2,146.5 442.8,153.1 451.9,159.8 460.5,166.6 468.4,173.8 475.9,181.2 482.8,188.6 489.5,195.7 495.8,202.2 501.8,208.4 507.4,214.6 512.7,221.2 518.3,228.3 524.0,235.7 528.5,243.2 530.5,250.5 529.2,257.6 525.4,264.5 520.4,271.4 515.6,278.3 510.9,285.2 505.7,292.1 500.6,299.0 496.0,305.8 492.2,312.3 488.8,318.7 485.5,325.2 481.8,332.2 478.0,339.6 474.2,347.3 469.8,355.7 464.3,364.9 457.6,375.6 449.8,387.6 441.4,399.6 432.8,410.6 423.5,420.7 413.6,430.3 404.0,439.0 395.6,446.4 389.1,452.1 383.7,456.5 378.9,460.1 373.8,463.5 368.5,466.9 363.3,469.8 358.0,472.5 352.3,475.0 346.1,477.3 339.6,479.3 332.9,481.2 326.3,483.2 300.0,483.2 300.0,87.8Z" opacity="0.0556"/>
<path d="M320.0,88.7L324.3,90.3 328.3,91.7 332.9,93.5 339.0,96.1 346.9,99.5 356.0,103.6 366.1,108.2 376.5,113.6 387.7,119.8 399.8,126.8 411.8,134.0 423.0,141.1 433.1,147.7 442.5,154.3 451.4,160.9 459.8,167.6 467.6,174.7 474.9,182.1 481.7,189.3 488.2,196.3 494.4,202.7 500.2,208.8 505.6,214.9 510.7,221.4 516.1,228.4 521.6,235.7 525.9,243.2 527.8,250.4 526.5,257.4 522.7,264.3 517.9,271.2 513.2,278.0 508.6,285.0 503.6,291.9 498.6,298.8 494.1,305.6 490.3,312.1 487.0,318.4 483.7,324.9 480.1,331.9 476.4,339.2 472.6,346.9 468.3,355.2 462.9,364.4 456.2,375.1 448.5,387.1 440.1,399.1 431.5,410.1 422.3,420.2 412.5,429.8 402.9,438.5 394.6,445.9 388.1,451.6 382.8,455.9 378.0,459.5 372.9,462.9 367.7,466.2 362.6,469.2 357.3,471.8 351.7,474.3 345.6,476.6 339.1,478.6 332.6,480.5 326.0,482.5 300.0,482.5 300.0,88.7Z" opacity="0.0588"/>
<path d="M320.0,89.6L324.3,91.2 328.3,92.6 332.9,94.4 339.0,97.0 346.9,100.4 356.0,104.5 366.1,109.3 376.5,114.6 387.7,120.9 399.8,128.0 411.9,135.3 423.0,142.4 433.0,149.0 442.2,155.5 450.9,162.0 459.1,168.7 466.8,175.7 473.9,182.9 480.6,190.1 486.9,196.9 492.9,203.2 498.5,209.2 503.7,215.2 508.6,221.5 513.8,228.5 519.1,235.7 523.2,243.1 525.0,250.3 523.7,257.3 520.0,264.1 515.3,270.9 510.7,277.8 506.2,284.7 501.4,291.7 496.5,298.6 492.1,305.5 488.4,311.9 485.1,318.2 481.9,324.6 478.4,331.5 474.7,338.8 471.0,346.5 466.8,354.7 461.5,363.9 454.8,374.6 447.1,386.5 438.8,398.6 430.3,409.6 421.1,419.7 411.3,429.3 401.7,438.0 393.5,445.4 387.0,451.0 381.8,455.3 377.0,458.9 372.0,462.2 366.8,465.5 361.8,468.4 356.6,471.1 351.1,473.6 345.1,475.8 338.7,477.9 332.2,479.8 325.8,481.8 300.0,481.8 300.0,89.6Z" opacity="0.0625"/>
<path d="M320.0,90.5L324.3,92.1 328.3,93.6 332.9,95.4 339.0,98.0 346.9,101.4 356.0,105.6 366.1,110.4 376.5,115.8 387.8,122.1 399.9,129.2 411.9,136.6 423.0,143.7 432.8,150.3 441.9,156.8 450.4,163.2 458.4,169.8 465.9,176.7 472.9,183.8 479.4,190.9 485.5,197.6 491.3,203.8 496.7,209.6 501.7,215.5 506.5,221.7 511.4,228.6 516.5,235.8 520.4,243.1 522.1,250.2 520.8,257.1 517.2,263.9 512.6,270.6 508.1,277.5 503.8,284.4 499.0,291.5 494.3,298.5 490.0,305.3 486.4,311.7 483.2,317.9 480.0,324.2 476.6,331.1 473.0,338.4 469.4,346.0 465.2,354.2 460.0,363.4 453.4,374.1 445.7,386.0 437.4,398.0 428.9,409.1 419.8,419.1 410.1,428.8 400.6,437.5 392.4,444.8 386.0,450.5 380.7,454.7 376.0,458.2 371.0,461.6 366.0,464.8 361.0,467.7 355.9,470.3 350.5,472.8 344.5,475.1 338.3,477.1 331.8,479.1 325.5,481.1 300.0,481.1 300.0,90.5Z" opacity="0.0667"/>
<path d="M320.0,91.5L324.3,93.1 328.3,94.6 332.9,96.4 339.0,99.0 346.9,102.5 356.0,106.6 366.1,111.5 376.5,116.9 387.8,123.3 399.9,130.5 412.0,138.0 423.0,145.1 432.7,151.7 441.6,158.1 449.8,164.4 457.7,170.9 465.0,177.7 471.8,184.7 478.1,191.7 484.1,198.3 489.7,204.3 494.9,210.0 499.7,215.8 504.2,221.9 509.0,228.6 513.8,235.8 517.5,243.0 519.1,250.1 517.8,256.9 514.3,263.6 509.8,270.4 505.4,277.2 501.2,284.1 496.6,291.2 492.1,298.3 487.9,305.1 484.4,311.5 481.2,317.6 478.1,323.9 474.7,330.7 471.2,338.0 467.7,345.5 463.6,353.7 458.4,362.8 451.9,373.5 444.3,385.4 436.0,397.5 427.5,408.5 418.5,418.6 408.8,428.2 399.4,436.9 391.2,444.3 384.8,449.9 379.6,454.1 374.9,457.6 370.0,460.9 365.0,464.1 360.2,466.9 355.2,469.5 349.8,471.9 344.0,474.2 337.8,476.3 331.4,478.3 325.2,480.4 300.0,480.4 300.0,91.5Z" opacity="0.0714"/>
<path d="M320.0,92.5L324.3,94.1 328.3,95.6 332.9,97.4 339.0,100.0 346.9,103.5 356.0,107.7 366.1,112.6 376.5,118.1 387.8,124.6 400.0,131.9 412.1,139.4 423.0,146.6 432.5,153.1 441.2,159.4 449.3,165.7 456.9,172.1 464.0,178.8 470.7,185.7 476.9,192.5 482.7,199.0 488.0,204.9 493.0,210.5 497.6,216.1 501.9,222.1 506.4,228.7 511.0,235.8 514.5,242.9 516.0,249.9 514.7,256.7 511.3,263.4 506.9,270.1 502.7,276.9 498.6,283.8 494.2,291.0 489.7,298.1 485.7,304.9 482.2,311.3 479.1,317.4 476.1,323.6 472.7,330.3 469.3,337.5 465.9,345.0 461.9,353.2 456.8,362.3 450.3,373.0 442.7,384.9 434.5,396.9 426.1,407.9 417.1,418.0 407.5,427.7 398.1,436.4 390.0,443.7 383.7,449.3 378.5,453.5 373.8,456.9 369.0,460.2 364.1,463.3 359.3,466.1 354.4,468.7 349.2,471.1 343.4,473.4 337.3,475.5 331.0,477.6 324.9,479.6 300.0,479.6 300.0,92.5Z" opacity="0.0769"/>
<path d="M320.0,93.5L324.3,95.2 328.3,96.6 332.9,98.4 339.0,101.1 346.9,104.6 356.0,108.9 366.1,113.8 376.5,119.4 387.8,125.9 400.0,133.3 412.1,140.9 423.0,148.1 432.4,154.6 440.9,160.8 448.7,167.0 456.1,173.3 463.1,179.9 469.5,186.7 475.5,193.4 481.1,199.7 486.3,205.5 491.0,210.9 495.4,216.4 499.5,222.3 503.8,228.8 508.1,235.8 511.4,242.9 512.8,249.8 511.5,256.5 508.2,263.1 503.9,269.8 499.8,276.5 495.9,283.5 491.6,290.7 487.3,297.8 483.4,304.7 480.0,311.1 477.0,317.1 474.0,323.2 470.7,329.9 467.4,337.0 464.0,344.5 460.2,352.6 455.2,361.7 448.7,372.4 441.2,384.3 433.0,396.3 424.6,407.3 415.7,417.4 406.1,427.1 396.8,435.8 388.8,443.1 382.5,448.7 377.3,452.8 372.7,456.2 367.9,459.4 363.1,462.5 358.4,465.3 353.6,467.8 348.5,470.2 342.8,472.5 336.8,474.7 330.6,476.8 324.5,478.9 300.0,478.9 300.0,93.5Z" opacity="0.0833"/>
<path d="M320.0,94.6L324.3,96.2 328.3,97.7 332.9,99.5 339.0,102.2 346.9,105.8 356.0,110.1 366.1,115.0 376.5,120.7 387.8,127.3 400.1,134.7 412.2,142.4 423.0,149.6 432.3,156.1 440.5,162.3 448.1,168.3 455.3,174.5 462.1,181.0 468.3,187.7 474.2,194.2 479.6,200.5 484.5,206.1 489.0,211.4 493.2,216.7 497.0,222.5 501.1,228.9 505.1,235.8 508.2,242.8 509.5,249.7 508.2,256.3 505.0,262.9 500.8,269.5 496.9,276.2 493.1,283.2 488.9,290.5 484.8,297.6 481.0,304.5 477.8,310.8 474.8,316.8 471.8,322.8 468.6,329.4 465.4,336.6 462.2,344.0 458.4,352.0 453.5,361.1 447.1,371.8 439.6,383.6 431.4,395.7 423.1,406.7 414.2,416.8 404.7,426.5 395.5,435.2 387.5,442.5 381.3,448.1 376.1,452.2 371.5,455.5 366.8,458.6 362.1,461.7 357.5,464.4 352.8,466.9 347.8,469.3 342.2,471.6 336.3,473.8 330.2,475.9 324.2,478.1 300.0,478.1 300.0,94.6Z" opacity="0.0909"/>
<path d="M320.0,95.7L324.3,97.3 328.3,98.8 332.9,100.6 339.0,103.3 346.9,107.0 356.0,111.3 366.1,116.3 376.5,122.0 387.8,128.7 400.1,136.2 412.2,144.0 423.0,151.2 432.1,157.7 440.1,163.7 447.5,169.7 454.4,175.8 461.0,182.2 467.1,188.7 472.7,195.2 478.0,201.3 482.7,206.8 486.9,211.9 490.8,217.1 494.4,222.7 498.3,229.0 502.0,235.8 504.9,242.7 506.1,249.5 504.7,256.1 501.6,262.6 497.7,269.1 493.8,275.8 490.2,282.9 486.2,290.2 482.3,297.4 478.6,304.3 475.4,310.6 472.5,316.5 469.6,322.4 466.4,329.0 463.3,336.1 460.2,343.4 456.5,351.5 451.7,360.5 445.3,371.1 437.9,383.0 429.8,395.0 421.5,406.1 412.7,416.2 403.3,425.9 394.1,434.6 386.2,441.9 380.0,447.4 374.9,451.5 370.3,454.7 365.7,457.8 361.0,460.9 356.6,463.6 352.0,466.0 347.1,468.4 341.6,470.7 335.7,472.9 329.8,475.1 323.8,477.2 300.0,477.2 300.0,95.7Z" opacity="0.1000"/>
<path d="M320.0,96.8L324.3,98.5 328.3,100.0 332.9,101.8 339.0,104.5 346.9,108.2 356.0,112.6 366.1,117.6 376.5,123.3 387.9,130.1 400.2,137.8 412.3,145.6 423.0,152.9 431.9,159.3 439.8,165.3 446.8,171.1 453.5,177.1 459.9,183.4 465.9,189.8 471.3,196.1 476.3,202.1 480.8,207.5 484.8,212.4 488.4,217.4 491.8,222.9 495.3,229.1 498.9,235.8 501.5,242.7 502.5,249.4 501.2,255.9 498.2,262.3 494.4,268.8 490.7,275.5 487.2,282.6 483.4,289.9 479.6,297.2 476.1,304.1 473.0,310.3 470.1,316.1 467.3,322.0 464.2,328.5 461.2,335.5 458.2,342.9 454.6,350.9 449.9,359.8 443.6,370.5 436.2,382.3 428.1,394.4 419.9,405.4 411.1,415.5 401.8,425.2 392.7,434.0 384.8,441.3 378.7,446.8 373.6,450.7 369.1,453.9 364.5,457.0 359.9,460.0 355.6,462.6 351.1,465.0 346.3,467.4 340.9,469.8 335.2,472.0 329.3,474.2 323.5,476.4 300.0,476.4 300.0,96.8Z" opacity="0.1111"/>
<path d="M320.0,98.0L324.3,99.7 328.3,101.2 332.9,103.0 339.0,105.7 346.9,109.4 356.0,113.8 366.1,119.0 376.5,124.8 387.9,131.6 400.2,139.4 412.3,147.3 423.0,154.6 431.8,161.0 439.4,166.9 446.2,172.6 452.6,178.5 458.8,184.6 464.5,190.9 469.8,197.1 474.6,202.9 478.8,208.1 482.6,212.9 486.0,217.8 489.1,223.1 492.4,229.2 495.6,235.8 498.0,242.6 498.9,249.2 497.6,255.7 494.6,262.0 491.0,268.5 487.4,275.1 484.1,282.2 480.5,289.6 476.9,296.9 473.5,303.9 470.5,310.1 467.7,315.8 464.9,321.6 461.9,328.1 459.0,335.0 456.1,342.3 452.6,350.2 448.0,359.2 441.8,369.8 434.4,381.7 426.4,393.7 418.2,404.7 409.5,414.9 400.2,424.6 391.2,433.3 383.4,440.6 377.3,446.1 372.3,450.0 367.8,453.1 363.3,456.2 358.8,459.1 354.6,461.7 350.3,464.1 345.5,466.4 340.3,468.8 334.6,471.0 328.8,473.2 323.1,475.5 300.0,475.5 300.0,98.0Z" opacity="0.1250"/>
<path d="M320.0,99.2L324.3,100.9 328.3,102.4 332.9,104.2 339.0,107.0 346.9,110.7 356.0,115.2 366.1,120.4 376.5,126.2 387.9,133.1 400.3,141.0 412.4,149.0 423.0,156.3 431.6,162.7 438.9,168.5 445.5,174.1 451.7,179.9 457.7,185.9 463.2,192.1 468.2,198.1 472.8,203.8 476.8,208.8 480.3,213.5 483.4,218.1 486.3,223.4 489.3,229.4 492.2,235.8 494.4,242.5 495.1,249.1 493.8,255.4 491.0,261.7 487.5,268.1 484.1,274.7 480.9,281.9 477.5,289.3 474.0,296.7 470.8,303.6 467.9,309.8 465.2,315.5 462.5,321.2 459.6,327.6 456.7,334.5 453.9,341.7 450.6,349.6 446.0,358.5 439.9,369.1 432.6,381.0 424.6,393.0 416.5,404.0 407.9,414.2 398.6,423.9 389.7,432.6 382.0,439.9 375.9,445.3 370.9,449.2 366.5,452.3 362.0,455.3 357.6,458.2 353.5,460.7 349.3,463.1 344.8,465.4 339.6,467.8 334.0,470.0 328.4,472.3 322.7,474.6 300.0,474.6 300.0,99.2Z" opacity="0.1429"/>
<path d="M320.0,100.5L324.3,102.2 328.3,103.6 332.9,105.5 339.0,108.2 346.9,112.0 356.0,116.6 366.1,121.8 376.5,127.7 387.9,134.7 400.4,142.7 412.5,150.8 423.0,158.1 431.4,164.4 438.5,170.2 444.8,175.7 450.8,181.3 456.5,187.2 461.8,193.3 466.6,199.1 471.0,204.7 474.7,209.6 477.9,214.0 480.8,218.5 483.4,223.6 486.1,229.5 488.8,235.9 490.7,242.4 491.3,248.9 490.0,255.2 487.2,261.4 483.9,267.7 480.7,274.3 477.6,281.5 474.4,289.0 471.1,296.4 468.1,303.4 465.3,309.5 462.6,315.1 460.0,320.8 457.1,327.1 454.4,333.9 451.7,341.1 448.5,348.9 444.0,357.8 438.0,368.4 430.7,380.2 422.8,392.3 414.7,403.3 406.2,413.5 397.0,423.2 388.1,431.9 380.5,439.2 374.5,444.6 369.5,448.4 365.1,451.5 360.8,454.4 356.5,457.3 352.5,459.7 348.4,462.0 343.9,464.3 338.9,466.7 333.4,469.0 327.9,471.3 322.3,473.6 300.0,473.6 300.0,100.5Z" opacity="0.1667"/>
<path d="M320.0,101.8L324.3,103.4 328.3,104.9 332.9,106.8 339.0,109.6 346.9,113.4 356.0,118.0 366.1,123.3 376.5,129.2 388.0,136.3 400.4,144.4 412.6,152.6 423.0,160.0 431.3,166.3 438.1,171.9 444.1,177.3 449.8,182.8 455.3,188.6 460.4,194.5 465.0,200.2 469.1,205.6 472.6,210.3 475.5,214.6 478.1,218.9 480.4,223.8 482.8,229.6 485.2,235.9 486.9,242.4 487.3,248.8 486.0,255.0 483.4,261.1 480.2,267.4 477.1,273.9 474.3,281.1 471.2,288.7 468.2,296.2 465.2,303.2 462.5,309.3 460.0,314.8 457.4,320.3 454.6,326.5 452.0,333.3 449.5,340.4 446.3,348.2 442.0,357.1 436.0,367.6 428.8,379.5 420.9,391.5 412.9,402.6 404.4,412.7 395.3,422.5 386.5,431.2 378.9,438.5 373.0,443.8 368.1,447.6 363.7,450.6 359.4,453.5 355.2,456.3 351.4,458.7 347.4,461.0 343.1,463.3 338.1,465.6 332.8,468.0 327.3,470.3 321.9,472.7 300.0,472.7 300.0,101.8Z" opacity="0.2000"/>
<path d="M320.0,103.1L324.3,104.8 328.3,106.3 332.9,108.1 339.0,110.9 346.9,114.8 356.0,119.4 366.1,124.8 376.5,130.8 388.0,138.0 400.5,146.2 412.6,154.5 423.0,161.9 431.1,168.1 437.6,173.7 443.3,178.9 448.8,184.3 454.1,190.0 458.9,195.7 463.3,201.3 467.2,206.5 470.4,211.1 473.0,215.2 475.3,219.3 477.4,224.1 479.5,229.7 481.5,235.9 482.9,242.3 483.2,248.6 481.9,254.7 479.4,260.8 476.4,267.0 473.5,273.5 470.8,280.7 467.9,288.3 465.1,295.9 462.3,302.9 459.7,309.0 457.3,314.4 454.7,319.9 452.1,326.0 449.5,332.7 447.1,339.8 444.1,347.5 439.9,356.3 433.9,366.9 426.8,378.7 418.9,390.8 411.0,401.8 402.6,412.0 393.6,421.7 384.9,430.5 377.4,437.8 371.4,443.1 366.6,446.8 362.3,449.7 358.1,452.5 354.0,455.3 350.2,457.7 346.4,459.9 342.2,462.1 337.4,464.5 332.2,466.9 326.8,469.3 321.5,471.7 300.0,471.7 300.0,103.1Z" opacity="0.2500"/>
<path d="M320.0,104.4L324.3,106.1 328.3,107.6 332.9,109.5 339.0,112.3 346.9,116.2 356.0,120.9 366.1,126.3 376.5,132.4 388.0,139.7 400.5,148.0 412.7,156.4 423.0,163.9 430.9,170.0 437.2,175.5 442.6,180.6 447.7,185.9 452.8,191.4 457.4,197.0 461.6,202.4 465.2,207.5 468.1,211.9 470.5,215.7 472.5,219.7 474.2,224.3 476.0,229.8 477.7,235.9 478.9,242.2 479.0,248.4 477.7,254.5 475.3,260.4 472.5,266.6 469.8,273.1 467.2,280.3 464.6,288.0 461.9,295.6 459.3,302.7 456.9,308.7 454.5,314.0 452.0,319.4 449.4,325.4 447.0,332.1 444.7,339.1 441.8,346.8 437.7,355.6 431.8,366.1 424.7,378.0 416.9,390.0 409.1,401.0 400.7,411.2 391.8,421.0 383.2,429.7 375.7,437.0 369.9,442.3 365.1,445.9 360.8,448.8 356.7,451.6 352.7,454.3 349.1,456.6 345.4,458.7 341.3,461.0 336.6,463.4 331.5,465.8 326.3,468.2 321.1,470.7 300.0,470.7 300.0,104.4Z" opacity="0.3333"/>
<path d="M320.0,105.8L324.3,107.5 328.3,109.0 332.9,110.9 339.0,113.8 346.9,117.7 356.0,122.5 366.1,127.9 376.5,134.1 388.0,141.5 400.6,149.9 412.8,158.4 423.0,165.9 430.7,172.0 436.7,177.4 441.8,182.4 446.7,187.5 451.5,192.9 455.9,198.3 459.8,203.6 463.2,208.5 465.8,212.7 467.9,216.4 469.5,220.1 471.0,224.6 472.5,230.0 473.9,235.9 474.7,242.1 474.7,248.3 473.4,254.2 471.1,260.1 468.5,266.2 465.9,272.7 463.6,279.9 461.1,287.7 458.7,295.4 456.3,302.4 453.9,308.4 451.6,313.6 449.2,318.9 446.7,324.9 444.4,331.5 442.3,338.4 439.5,346.1 435.5,354.8 429.7,365.3 422.6,377.1 414.9,389.2 407.1,400.2 398.8,410.4 390.0,420.2 381.4,429.0 374.1,436.2 368.3,441.4 363.5,445.1 359.3,447.8 355.2,450.6 351.4,453.2 347.9,455.5 344.4,457.6 340.4,459.8 335.8,462.2 330.9,464.7 325.7,467.2 320.7,469.6 300.0,469.6 300.0,105.8Z" opacity="0.5000"/>
<path d="M320.0,107.3L324.3,109.0 328.3,110.5 332.9,112.4 339.0,115.2 346.9,119.2 356.0,124.0 366.1,129.6 376.5,135.8 388.1,143.3 400.7,151.8 412.8,160.4 423.0,167.9 430.5,174.0 436.2,179.3 441.0,184.2 445.6,189.2 450.1,194.4 454.3,199.7 458.0,204.8 461.1,209.5 463.4,213.5 465.2,217.0 466.5,220.6 467.7,224.9 468.9,230.1 469.9,235.9 470.5,242.0 470.3,248.1 469.0,253.9 466.8,259.7 464.4,265.8 462.0,272.2 459.8,279.5 457.6,287.3 455.4,295.1 453.1,302.1 450.9,308.0 448.6,313.2 446.3,318.4 443.9,324.3 441.7,330.8 439.7,337.7 437.1,345.3 433.2,354.0 427.5,364.5 420.5,376.3 412.8,388.4 405.0,399.4 396.9,409.6 388.1,419.4 379.7,428.2 372.4,435.4 366.6,440.6 361.9,444.1 357.8,446.9 353.8,449.5 350.0,452.1 346.7,454.3 343.3,456.4 339.5,458.6 335.0,461.0 330.2,463.5 325.2,466.0 320.2,468.5 300.0,468.5 300.0,107.3Z" opacity="1.0000"/>
</g></g>
<rect x="34" y="0" width="1" height="533" fill="#8a8a8a"/>
<g stroke="#909090" stroke-width="1" stroke-dasharray="3 5" fill="none"><path d="M59,53.5 H520"/><path d="M58,483.5 H520" stroke-dashoffset="1.2"/><path d="M58.5,58 V482 M522.5,58 V482"/><path d="M521.3,484 l1.6,-1.6" stroke-dasharray="none"/></g>
<text x="526 533.2 540.1 545.6 550.8" y="74.2" font-family="Liberation Mono,monospace" font-size="12" text-rendering="geometricPrecision" fill="#868686">288,3</text>
<text x="62.3 68.5 75 80.4 87.4" y="482.2" font-family="Liberation Mono,monospace" font-size="12" text-rendering="geometricPrecision" fill="#868686">14,99</text>
<!-- transform handle -->
<rect x="309" y="221.9" width="121" height="1.6" fill="#7c7c7c"/>
<rect x="338.7" y="173" width="1.2" height="100" fill="#000"/>
<path d="M357.8,176 A49.7,49.7 0 0 1 384.6,202" fill="none" stroke="#a4a4a4" stroke-width="1.2"/>
<path d="M340.5,222.6 L383.6,204.4" stroke="#000" stroke-width="1.3" fill="none"/>
<rect x="383.4" y="201.1" width="4.4" height="4.5" fill="#000"/>
<rect x="382.4" y="200.1" width="4.4" height="4.5" fill="#c2c2c2"/>
<rect x="337.6" y="220.6" width="4.4" height="4.4" fill="#000"/>
<rect x="336.6" y="219.6" width="4.4" height="4.4" fill="#fff"/>
</svg>

<!-- status bars -->
<div class="abs" style="left:0;top:533px;width:558px;height:1px;background:#3a3a3a"></div>
<div class="abs" style="left:0;top:557px;width:558px;height:2px;background:#323232"></div>
<div class="st" style="left:4.3px;top:540px;color:#dcdcdc;">321</div>
<div class="st" style="left:120.5px;top:540px;color:#d24848;">1.00000</div>
<div class="st" style="left:170.7px;top:540px;color:#48d048;">1.00000</div>
<div class="st" style="left:221.5px;top:540px;color:#4242c8;">1.00000</div>
<div class="st" style="left:272.7px;top:540px;color:#e8e8e8;">1.00000</div>
<div class="abs" style="left:324px;top:537px;width:20px;height:17px;background:#fff"></div>
<div class="st" style="left:350.8px;top:540px;color:#dcdcdc;">H:</div>
<div class="st" style="left:372.6px;top:540px;color:#dcdcdc;">0</div>
<div class="st" style="left:383.5px;top:540px;color:#dcdcdc;">S:<span style="margin-left:1.5px">0.00</span></div>
<div class="st" style="left:426px;top:540px;color:#dcdcdc;">V:<span style="margin-left:1.5px">1.00</span></div>
<div class="st" style="left:469.4px;top:540px;color:#dcdcdc;letter-spacing:0.5px">L:</div>
<div class="st" style="left:484.8px;top:540px;color:#dcdcdc;">1.00000</div>
<svg class="abs" style="left:543px;top:539px" width="12" height="6"><path d="M0.7,0 h10 l-5,5.2z" fill="#eee"/></svg>
<div class="st" style="left:4.3px;top:565px;color:#dcdcdc;">321</div>
<div class="st" style="left:120.5px;top:565px;color:#d24848;">1.00000</div>
<div class="st" style="left:170.7px;top:565px;color:#48d048;">1.00000</div>
<div class="st" style="left:221.5px;top:565px;color:#4242c8;">1.00000</div>
<div class="st" style="left:272.7px;top:565px;color:#e8e8e8;">1.00000</div>
<div class="abs" style="left:324px;top:562px;width:20px;height:17px;background:#fff"></div>
<div class="st" style="left:350.8px;top:565px;color:#dcdcdc;">H:</div>
<div class="st" style="left:372.6px;top:565px;color:#dcdcdc;">0</div>
<div class="st" style="left:383.5px;top:565px;color:#dcdcdc;">S:<span style="margin-left:1.5px">0.00</span></div>
<div class="st" style="left:426px;top:565px;color:#dcdcdc;">V:<span style="margin-left:1.5px">1.00</span></div>
<div class="st" style="left:469.4px;top:565px;color:#dcdcdc;letter-spacing:0.5px">L:</div>
<div class="st" style="left:484.8px;top:565px;color:#dcdcdc;">1.00000</div>
<svg class="abs" style="left:543px;top:564px" width="12" height="6"><path d="M0.7,0 h10 l-5,5.2z" fill="#eee"/></svg>

<!-- bottom toolbar -->
<div class="abs" style="left:0;top:582px;width:558px;height:20px;background:#323232"></div>
<div class="btn" style="left:-4px;width:22px;border-radius:0"></div>
<div class="fld" style="left:18px;width:32px;border-radius:0;padding-left:4px">10</div>
<div class="btn" style="left:50px;width:32px;border-radius:0 4px 0 0"></div>
<div class="st" style="left:90px;top:592px;color:#cfcfcf;line-height:16px">fps</div>
<div class="fld" style="left:110px;width:46px">24</div>
<div class="btn" style="left:159px;width:30px;background:#575757"></div>
<div class="btn" style="left:402.5px;width:29px;background:#525252"></div>
<div class="fld" style="left:435px;width:98px">20-50</div>
<div class="btn" style="left:536px;width:22px;background:#3c3c3c"></div>
<svg class="abs" style="left:0;top:582px" width="558" height="20" viewBox="0 582 558 20">
<path d="M0,598 h1.4 v4 h-1.4z M9.5,593 V602 H1.2Z" fill="#000"/>
<path d="M58,593 l9,9 h-9z M65.8,593 l9,9 h-9z" fill="#000"/>
<circle cx="173.9" cy="603.4" r="6.9" fill="none" stroke="#000" stroke-width="2.1"/>
<path d="M173.6,596.7 L176.4,593.9 V599.5Z" fill="#000"/>
<rect x="410" y="594" width="13.8" height="9" fill="#000"/>
<path d="M413,595.6 L422,599.8 L413,604Z" fill="#6a6a6a"/>
<path d="M545,592.8 L550.4,597 L545,601.2Z" fill="#000"/>
</svg>

<!-- splitter + toolbar -->
<div class="abs" style="left:558px;top:0;width:1px;height:602px;background:#2a2a2a"></div>
<div class="abs" style="left:559px;top:0;width:1px;height:602px;background:#161616"></div>
<div class="abs" style="left:560px;top:0;width:1px;height:602px;background:#444"></div>
<div class="abs" style="left:603px;top:0;width:1px;height:602px;background:#0c0c0c"></div>
<div class="abs" style="left:604px;top:0;width:1px;height:602px;background:#444"></div>
<div class="abs" style="left:605px;top:156px;width:409px;height:1px;background:#080808"></div>
<div class="abs" style="left:605px;top:157px;width:409px;height:1px;background:#4a4a4a"></div>
<div class="abs" style="left:605px;top:161px;width:409px;height:1px;background:#2b2b2b"></div>


<svg class="abs" style="left:561px;top:0" width="42" height="300" viewBox="561 0 42 300">
<defs>
<linearGradient id="gg" x1="0" y1="0" x2="0" y2="1"><stop offset="0" stop-color="#a8a8a8"/><stop offset="1" stop-color="#888"/></linearGradient>
</defs>
<!-- hexagon -->
<path d="M582,3 L590.9,8 V18 L582,23 L573.1,18 V8Z" fill="url(#gg)"/>
<!-- particles -->
<g fill="#8c8c8c">
<circle cx="582" cy="46.7" r="2.1"/>
<circle cx="582" cy="42.3" r="1.5"/><circle cx="582" cy="51.1" r="1.5"/>
<circle cx="578.2" cy="44.5" r="1.5"/><circle cx="585.8" cy="44.5" r="1.5"/>
<circle cx="578.2" cy="48.9" r="1.5"/><circle cx="585.8" cy="48.9" r="1.5"/>
<circle cx="582" cy="38.8" r="1"/><circle cx="582" cy="54.8" r="1"/>
<circle cx="575.3" cy="42.6" r="0.9"/><circle cx="588.7" cy="42.6" r="0.9"/>
<circle cx="575.3" cy="51.4" r="0.9"/><circle cx="588.7" cy="51.4" r="0.9"/>
<g opacity="0.5"><circle cx="582" cy="36.5" r="0.6"/><circle cx="582" cy="57.5" r="0.6"/>
<circle cx="573.3" cy="41" r="0.6"/><circle cx="590.7" cy="41" r="0.6"/><circle cx="573.3" cy="53" r="0.6"/><circle cx="590.7" cy="53" r="0.6"/></g>
</g>
<!-- D -->
<circle cx="582" cy="81" r="9.9" fill="url(#gg)"/>
<path d="M577,74.8 h5.2 a5.2,6.3 0 0 1 0,12.6 h-5.2z M579.8,77.3 v7.6 h2 a2.8,3.8 0 0 0 0,-7.6z" fill="#333" fill-rule="evenodd"/>
<!-- eye -->
<path d="M572,115 Q582,103.5 592,115 Q582,126.5 572,115Z" fill="#9a9a9a"/>
<circle cx="581.8" cy="115" r="4" fill="#333"/>
<!-- tags -->
<path d="M586.4,158.8 L592,147.6 L590.5,142 L583,155.5Z" fill="#9c9c9c"/>
<path d="M581.2,140.5 L588.5,139.3 Q590.5,139.5 590.5,141.5 L590.6,146.3 L581.2,157.3 L572.2,150.3Z" fill="#acacac" stroke="#323232" stroke-width="0.5"/>
<circle cx="588.4" cy="141.2" r="0.9" fill="#333"/>
<!-- wrenches -->
<path d="M583.5,192.8 V186 Q579.2,184 579,179.4 Q579.2,176 581.4,174.2 Q582.6,175.6 582.9,177.5 Q583.2,181 585.8,181.2 Q588.4,181 588.9,177.5 Q589.2,175.4 590.4,174 Q592.5,176 592.6,179.4 Q592.4,184 588.2,186 V192.8Z" fill="#a2a2a2"/>
<path d="M575,192.8 V189.6 Q572.3,188.4 572.2,185.6 Q572.3,183.8 573.2,182.7 Q574.4,183.6 574.7,185 Q575,186.9 576.9,187 Q578.8,186.9 579.1,185 Q579.4,183.6 580.5,182.7 Q581.3,183.8 581.3,185.6 Q581.2,188.4 579.4,189.6 V192.8Z" fill="#a2a2a2"/>
<!-- box -->
<path d="M575.3,210.4 H589.2 L591,214.6 H573.5Z" fill="#262626" stroke="#a8a8a8" stroke-width="0.9"/>
<rect x="573.1" y="214.6" width="18.2" height="10.6" fill="url(#gg)"/>
<!-- red furnace icon -->
<defs><radialGradient id="rg1"><stop offset="0" stop-color="#ff2020" stop-opacity="0.85"/><stop offset="1" stop-color="#ff0000" stop-opacity="0"/></radialGradient>
<filter id="sb" x="-30%" y="-30%" width="160%" height="160%"><feGaussianBlur stdDeviation="0.5"/></filter></defs>
<rect x="570.5" y="239.6" width="23.2" height="21.6" fill="#080000" stroke="#801212" stroke-width="1.1"/>
<circle cx="575.5" cy="255.5" r="8" fill="url(#rg1)" opacity="0.8"/>
<circle cx="583.3" cy="243.2" r="6" fill="url(#rg1)" opacity="0.7"/>
<circle cx="589" cy="252" r="5" fill="url(#rg1)" opacity="0.6"/>
<path d="M577,245.5 l3.4,0 l3.6,5.6 l0.6,-5.6 l2.6,0 l-1,8.2 l-3.2,0 l-3.4,-5.4 l-0.6,5.4 l-2.8,0z" fill="#35353c"/>
<g filter="url(#sb)">
<path d="M575.3,246 Q576.2,254 584,255.6 Q576.2,257 575.3,261.2 Q574.4,257 570.6,255.6 Q574.4,254 575.3,246Z" fill="#ff1a1a"/>
<path d="M583.2,239.8 Q583.7,242.6 588,243 Q583.7,243.5 583.2,247.4 Q582.7,243.5 578.4,243 Q582.7,242.6 583.2,239.8Z" fill="#f02424"/>
<path d="M588.9,249 Q589.2,251.7 591.6,252 Q589.2,252.3 588.9,255 Q588.6,252.3 586.2,252 Q588.6,251.7 588.9,249Z" fill="#c02a18"/>
<path d="M586,247.6 Q586.2,248.9 587.6,249.1 Q586.2,249.3 586,250.6 Q585.8,249.3 584.4,249.1 Q585.8,248.9 586,247.6Z" fill="#a02414"/>
</g>
<!-- fire -->
<circle cx="582" cy="285.3" r="9.9" fill="none" stroke="#9a9a9a" stroke-width="1.9"/>
<path d="M575.6,291.2 Q576.2,287.5 577.4,284 Q578.6,286.3 578.9,288.6 Q579,283.3 582.7,277.5 Q582.2,281 583.6,283.4 Q584.2,281.5 585,280.2 Q585.6,282.5 587.3,284.8 Q588.8,287.5 588.2,291.2 Q582,297 575.6,291.2Z M582.5,283.6 Q580.8,286.4 582.6,289.2 Q584.4,287 582.5,283.6Z" fill="#9a9a9a" fill-rule="evenodd"/>
</svg>



<svg class="abs" style="left:605px;top:158px" width="409" height="444" viewBox="605 158 409 444">
<defs>
<linearGradient id="gGreen" x1="0" y1="0" x2="0" y2="1"><stop offset="0" stop-color="#84d484"/><stop offset="1" stop-color="#4c9a4c"/></linearGradient>
<linearGradient id="gPurp" x1="0" y1="0" x2="0" y2="1"><stop offset="0" stop-color="#c598cc"/><stop offset="1" stop-color="#80608a"/></linearGradient>
<radialGradient id="gBadge"><stop offset="0" stop-color="#cc6464"/><stop offset="0.7" stop-color="#b84e4e"/><stop offset="1" stop-color="#9c3c3c"/></radialGradient>
<linearGradient id="gOr" x1="0" y1="0" x2="0" y2="1"><stop offset="0" stop-color="#e69660"/><stop offset="1" stop-color="#a0603a"/></linearGradient>
</defs>
<!-- dotted lines -->
<path d="M871.2,304.5 L1016,490.1" stroke="#262626" stroke-width="3" stroke-dasharray="2.6 1.5" stroke-dashoffset="0.3" fill="none"/>
<path d="M871.2,304.5 L1016,490.1" stroke="#e8bc74" stroke-width="1.8" stroke-dasharray="2 2.1" fill="none"/>
<path d="M885.3,506 L985.3,606" stroke="#8e7646" stroke-width="1.8" stroke-dasharray="1.9 2.4 1.9 9.74" fill="none"/>
<!-- orange arrow into Bezier1 -->
<path d="M835.5,219.5 L853.5,249.5" stroke="#f6b860" stroke-width="2.4" fill="none"/>
<path d="M857,255.8 L846.6,246.6 L854.6,241.8Z" fill="#f6b860"/>
<!-- black arrow into Transform3 -->
<path d="M689.8,369.2 L706,396.3" stroke="#000" stroke-width="2" fill="none"/>
<path d="M710.2,403.2 L699.3,394 L707.9,388.9Z" fill="#000"/>
<!-- vertical arrows -->
<path d="M863,304 V392 M863,424 V452" stroke="#000" stroke-width="2" fill="none"/>
<path d="M863,403.5 L858.3,389 H867.7Z M863,464.5 L858.3,450 H867.7Z" fill="#000"/>
<!-- Transform3 -> MotionBlur -->
<path d="M764,414.5 H806" stroke="#000" stroke-width="2" fill="none"/>
<path d="M815.5,414.5 L802.5,410.5 V418.5Z" fill="#000"/>
<!-- nodes -->
<rect x="816.5" y="256.5" width="94" height="20" fill="url(#gGreen)" stroke="#183018"/>
<rect x="816.5" y="284.5" width="94" height="20" fill="url(#gPurp)" stroke="#2a1c2c"/>
<rect x="670.5" y="404.5" width="94" height="20" fill="url(#gPurp)" stroke="#2a1c2c"/>
<rect x="816.5" y="404.5" width="94" height="20" fill="url(#gOr)" stroke="#321c0e"/>
<rect x="816.5" y="465.5" width="94" height="35" fill="url(#gOr)" stroke="#321c0e"/>
<!-- small triangles -->
<path d="M858.2,277 H867.8 L863,284Z" fill="#f4b45c"/>
<path d="M910.8,266 L916,261.3 V270.7Z" fill="#f4b45c"/>
<path d="M911.3,483 L916,478.5 V487.5Z" fill="#000"/>
<!-- channel indicators -->
<g>
<rect x="820" y="272.3" width="8.5" height="3.2" fill="#e01010"/><rect x="828.5" y="272.3" width="8.5" height="3.2" fill="#20d820"/><rect x="837" y="272.3" width="8.7" height="3.2" fill="#1010c0"/><path d="M846,275.5 v-2 q0,-1.6 1.6,-1.6 h5.3 q1.6,0 1.6,1.6 v2z" fill="#fff"/>
<rect x="820" y="300.3" width="8.5" height="3.2" fill="#e01010"/><rect x="828.5" y="300.3" width="8.5" height="3.2" fill="#20d820"/><rect x="837" y="300.3" width="8.7" height="3.2" fill="#1010c0"/><path d="M846,303.5 v-2 q0,-1.6 1.6,-1.6 h5.3 q1.6,0 1.6,1.6 v2z" fill="#fff"/>
<path d="M700,423.2 v-1.4 q0,-1.4 1.4,-1.4 h6.2 q1.4,0 1.4,1.4 v1.4z" fill="#fff"/>
<rect x="822.7" y="420.3" width="3.2" height="3" fill="#e01010"/><rect x="831" y="420.3" width="3.2" height="3" fill="#20d820"/><rect x="840" y="420.3" width="3.2" height="3" fill="#1010c0"/><rect x="849" y="420.3" width="3.2" height="3" fill="#fff"/>
<rect x="864.5" y="420.3" width="8" height="3" fill="#e020e0"/><rect x="872.5" y="420.3" width="9" height="3" fill="#30e0e0"/>
<rect x="820" y="496.3" width="8.5" height="3.2" fill="#e01010"/><rect x="828.5" y="496.3" width="8.5" height="3.2" fill="#20d820"/><rect x="837" y="496.3" width="8.7" height="3.2" fill="#1010c0"/><path d="M846,499.5 v-2 q0,-1.6 1.6,-1.6 h5.3 q1.6,0 1.6,1.6 v2z" fill="#fff"/>
<rect x="864" y="496.3" width="8.5" height="3.2" fill="#e020e0"/><rect x="873.5" y="496.3" width="8.3" height="3.2" fill="#30e0e0"/>
</g>
<!-- labels -->
<g font-family="DejaVu Sans, Liberation Sans, sans-serif" fill="#0a0a0a">
<text x="840.3" y="273" font-size="12.5">Bezier1</text>
<text x="829.1" y="300.5" font-size="12.5">Transform2</text>
<text x="683.8" y="420.5" font-size="12.5">Transform3</text>
<text x="817.6" y="421" font-size="12.3">MotionBlur2D2</text>
<text x="829.2" y="482.7" font-size="12.2">VectorBlur2</text>
<text x="852.6" y="495.7" font-size="12.2">(all)</text>
</g>
<text x="748" y="421.3" font-family="DejaVu Sans, Liberation Sans, sans-serif" font-size="12" fill="#f4c272" stroke="#2a2a2a" stroke-width="1.6" paint-order="stroke" letter-spacing="0.55">2D transf</text>
<!-- badges -->
<g transform="translate(911.2,255.8)"><circle r="4.9" fill="url(#gBadge)" stroke="#8a3232" stroke-width="0.8"/><path d="M-2.1,2.4 L-0.5,-2.6 H0.5 L2.1,2.4 H0.9 L0,0.4 L-0.9,2.4Z" fill="#f6dada"/></g>
<g transform="translate(911.2,283.8)"><circle r="4.9" fill="url(#gBadge)" stroke="#8a3232" stroke-width="0.8"/><path d="M-2.1,2.4 L-0.5,-2.6 H0.5 L2.1,2.4 H0.9 L0,0.4 L-0.9,2.4Z" fill="#f6dada"/></g>
<g transform="translate(765.2,404.2)"><circle r="4.9" fill="url(#gBadge)" stroke="#8a3232" stroke-width="0.8"/><path d="M-2.1,2.4 L-0.5,-2.6 H0.5 L2.1,2.4 H0.9 L0,0.4 L-0.9,2.4Z" fill="#f6dada"/></g>
</svg>

</body></html>
